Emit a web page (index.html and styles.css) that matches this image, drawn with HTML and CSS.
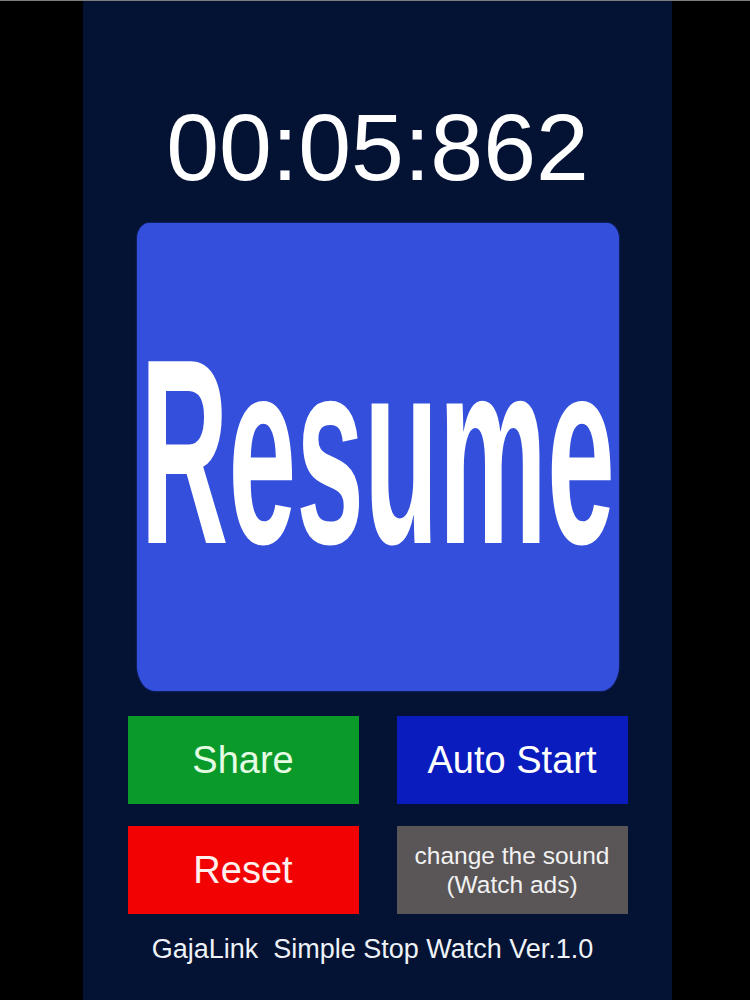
FILE: index.html
```html
<!DOCTYPE html>
<html lang="en">
<head>
<meta charset="utf-8">
<title>Simple Stop Watch</title>
<link rel="stylesheet" href="styles.css">
</head>
<body>
<main class="screen">
  <div class="timer">00:05:862</div>
  <button class="main-btn"><span class="main-label">Resume</span></button>
  <div class="controls">
    <button class="btn btn-share">Share</button>
    <button class="btn btn-auto">Auto Start</button>
    <button class="btn btn-reset">Reset</button>
    <button class="btn btn-sound">change the sound<br>(Watch ads)</button>
  </div>
  <footer class="footer">GajaLink&nbsp; Simple Stop Watch Ver.1.0</footer>
</main>
</body>
</html>
```

FILE: styles.css
```css
html, body {
  margin: 0;
  padding: 0;
  background: #000;
  height: 1000px;
  overflow: hidden;
}
body {
  border-top: 1px solid #7d7d7d;
  box-sizing: border-box;
  font-family: "Liberation Sans", Arial, sans-serif;
}
.screen {
  margin-left: 83px;
  width: 589px;
  height: 999px;
  background: #041233;
  display: flex;
  flex-direction: column;
  align-items: center;
}
.timer {
  margin-top: 99px;
  font-size: 95px;
  line-height: 94px;
  color: #fff;
}
.main-btn {
  margin-top: 29px;
  width: 482px;
  height: 468px;
  border: none;
  padding: 0 0 11px;
  background: #334fdb;
  border-radius: 12px 12px 18px 18px / 16px 16px 26px 26px;
  box-shadow: 0 0 2px 0 #2c46c4;
  display: flex;
  align-items: center;
  justify-content: center;
  overflow: hidden;
  font-family: inherit;
}
.main-label {
  display: block;
  flex: none;
  font-size: 264px;
  font-weight: bold;
  line-height: 264px;
  color: #fff;
  transform: scaleX(0.462);
  transform-origin: center;
  white-space: nowrap;
}
.controls {
  margin-top: 25px;
  display: grid;
  grid-template-columns: 231px 231px;
  grid-auto-rows: 88px;
  column-gap: 38px;
  row-gap: 22px;
}
.btn {
  border: none;
  padding: 0;
  margin: 0;
  font-family: inherit;
  font-size: 38px;
  color: #fff;
  display: flex;
  align-items: center;
  justify-content: center;
  text-align: center;
}
.btn-share {
  background: #0a9a29;
  color: #e4fbe4;
}
.btn-auto {
  background: #0a1cbd;
}
.btn-reset {
  background: #f20202;
  color: #fff0f0;
}
.btn-sound {
  background: #5a5658;
  font-size: 24.5px;
  line-height: 29px;
  color: #f2f2f2;
}
.footer {
  margin-top: 20px;
  padding-right: 10px;
  font-size: 27px;
  line-height: 30px;
  color: #eef2f8;
  white-space: nowrap;
}
```
